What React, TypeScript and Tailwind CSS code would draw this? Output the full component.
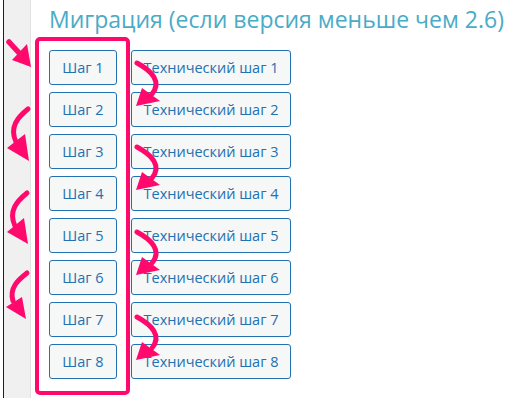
import React from "react";

const steps = [1, 2, 3, 4, 5, 6, 7, 8];

const PINK = "#ff0a6c";

const Arrows = () => {
  const mids = [63, 147, 232, 317];
  return (
    <svg
      className="absolute inset-0 pointer-events-none"
      width="520"
      height="401"
      viewBox="0 0 520 401"
    >
      {/* first straight arrow */}
      <path d="M9 42 L21 55" stroke={PINK} strokeWidth="5.5" strokeLinecap="round" fill="none" />
      <polygon points="12,60 27,44 31,67" fill={PINK} />

      {/* left curved arrows */}
      <path d="M28 109 C 18 117 9 127 16 142" stroke={PINK} strokeWidth="5" strokeLinecap="round" fill="none" />
      <polygon points="7,148 25,134 29,161" fill={PINK} />

      <path d="M27 193 C 17 201 8 211 15 226" stroke={PINK} strokeWidth="5" strokeLinecap="round" fill="none" />
      <polygon points="7,232 24,218 28,244" fill={PINK} />

      <path d="M27 273 C 18 280 9 288 13 301" stroke={PINK} strokeWidth="5" strokeLinecap="round" fill="none" />
      <polygon points="6,307 22,297 26,319" fill={PINK} />

      {/* middle curved arrows */}
      {mids.map((y) => (
        <g key={y}>
          <path
            d={`M137 ${y} C 152 ${y + 8} 162 ${y + 19} 152 ${y + 31}`}
            stroke={PINK}
            strokeWidth="5"
            strokeLinecap="round"
            fill="none"
          />
          <polygon
            points={`142,${y + 25} 160,${y + 38} 136,${y + 43}`}
            fill={PINK}
          />
        </g>
      ))}
    </svg>
  );
};

const Button = ({ label, className }: { label: string; className: string }) => (
  <button
    className={`h-[35px] rounded-[3px] border border-[#2271b1] bg-[#f6f7f7] text-[#2271b1] text-[14.5px] flex items-center justify-center ${className}`}
  >
    {label}
  </button>
);

const App = () => {
  return (
    <div
      className="relative w-[520px] h-[401px] bg-white flex overflow-hidden"
      style={{ fontFamily: '"Open Sans", "Noto Sans", sans-serif' }}
    >
      <aside className="w-[31px] h-full pl-[3px]">
        <div className="h-[398px] border-l border-l-[#1e1e1e] border-r border-r-[#e2e2e4] bg-[#f0f0f1]" />
      </aside>

      <main className="pl-[18px]">
        <h2 className="mt-[8px] text-[23px] leading-[23px] text-[#4aabc6] whitespace-nowrap">
          Миграция (если версия меньше чем 2.6)
        </h2>

        <div className="mt-[19px] flex flex-col gap-[7px]">
          {steps.map((n) => (
            <div key={n} className="flex gap-[14px]">
              <Button label={`Шаг ${n}`} className="w-[68px]" />
              <Button label={`Технический шаг ${n}`} className="w-[160px]" />
            </div>
          ))}
        </div>
      </main>

      <div className="absolute left-[35px] top-[37px] w-[95px] h-[358px] border-4 border-[#ff0a6c] rounded-[5px] pointer-events-none" />

      <Arrows />
    </div>
  );
};

export default App;
